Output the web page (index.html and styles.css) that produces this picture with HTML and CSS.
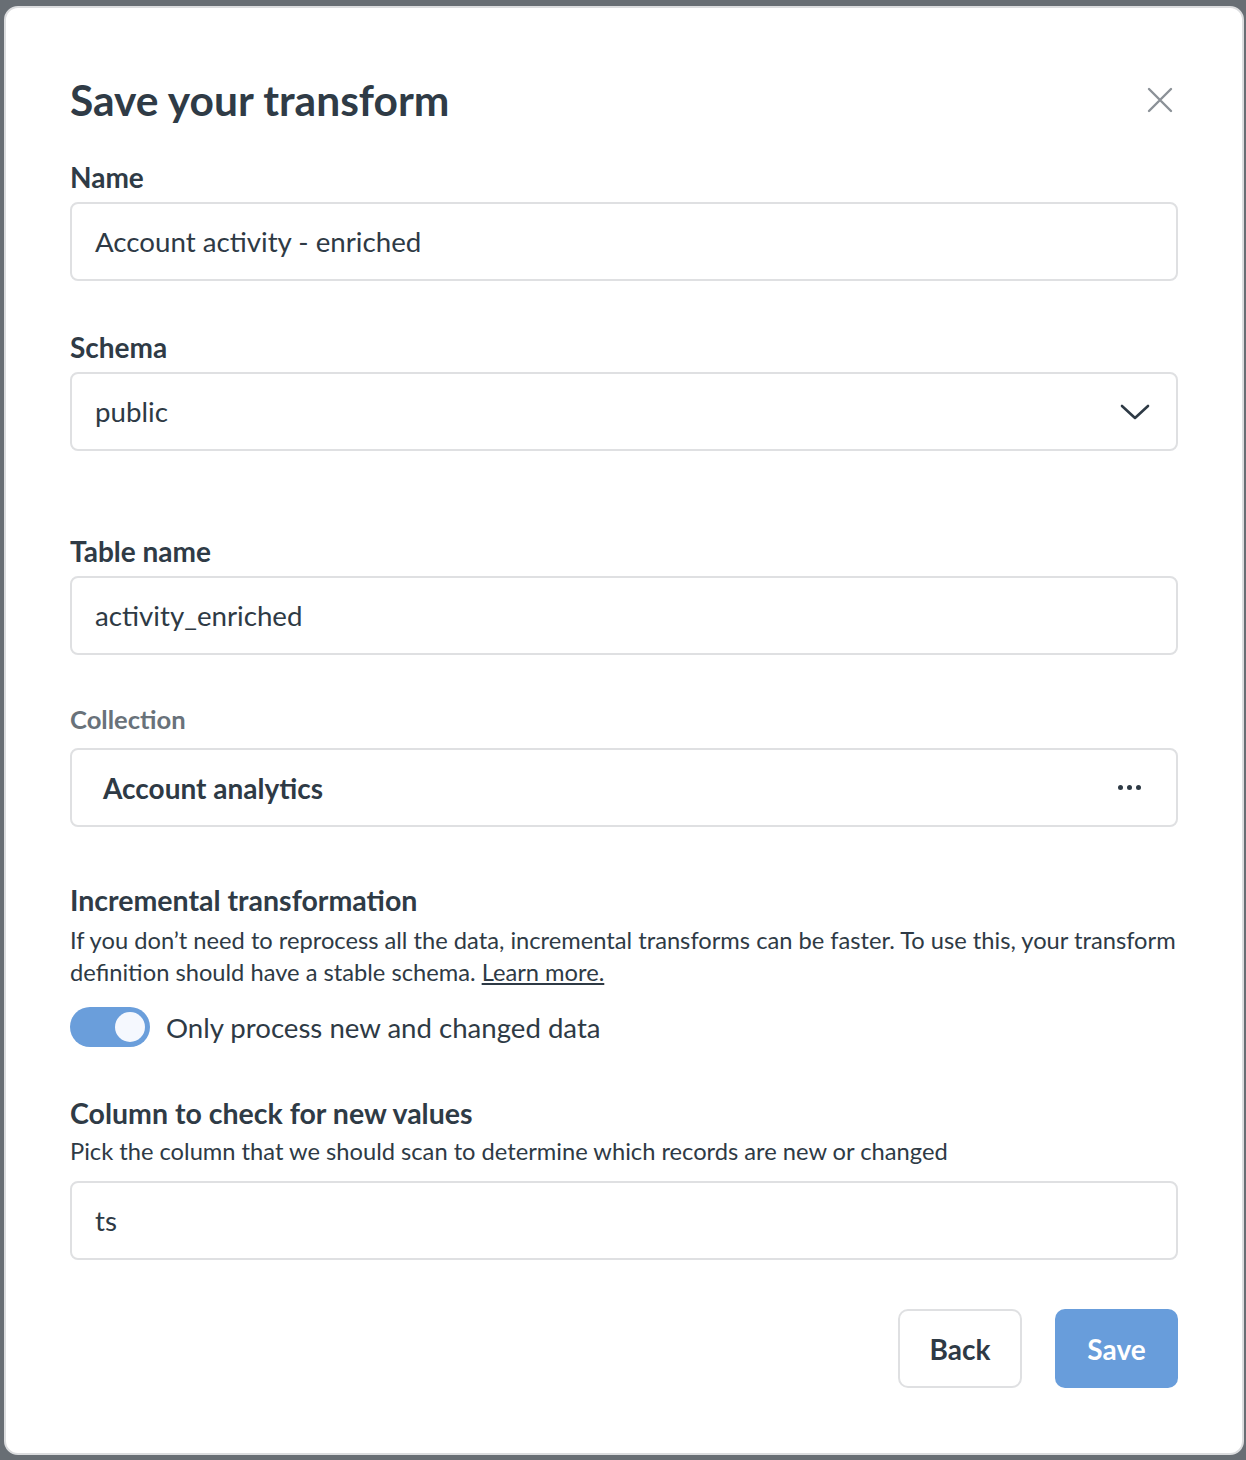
FILE: index.html
```html
<!DOCTYPE html>
<html lang="en">
<head>
<meta charset="utf-8">
<title>Save your transform</title>
<link rel="stylesheet" href="styles.css">
</head>
<body>
<div class="backdrop">
  <div class="modal">
    <div class="modal-header">
      <h1 class="title">Save your transform</h1>
      <button class="close" aria-label="Close">
        <svg width="26" height="26" viewBox="0 0 26 26"><path d="M2 2 L24 24 M24 2 L2 24" stroke="#8b9197" stroke-width="2.4" stroke-linecap="round" fill="none"/></svg>
      </button>
    </div>

    <div class="field">
      <label class="label">Name</label>
      <div class="input">Account activity - enriched</div>
    </div>

    <div class="field">
      <label class="label">Schema</label>
      <div class="input select">
        <span>public</span>
        <svg class="chevron" width="30" height="18" viewBox="0 0 30 18"><path d="M2 3 L15 15 L28 3" stroke="#2e3a45" stroke-width="2.6" stroke-linecap="round" stroke-linejoin="round" fill="none"/></svg>
      </div>
    </div>

    <div class="field table-field">
      <label class="label">Table name</label>
      <div class="input">activity_enriched</div>
    </div>

    <div class="field collection-field">
      <label class="label muted">Collection</label>
      <div class="input collection">
        <span>Account analytics</span>
        <span class="dots"><i></i><i></i><i></i></span>
      </div>
    </div>

    <div class="section">
      <h2 class="heading">Incremental transformation</h2>
      <p class="desc">If you don’t need to reprocess all the data, incremental transforms can be faster. To use this, your transform definition should have a stable schema. <a href="#" class="link">Learn more.</a></p>
      <div class="toggle-row">
        <span class="toggle"><span class="knob"></span></span>
        <span class="toggle-label">Only process new and changed data</span>
      </div>
    </div>

    <div class="section column-section">
      <h2 class="heading">Column to check for new values</h2>
      <p class="desc">Pick the column that we should scan to determine which records are new or changed</p>
      <div class="input">ts</div>
    </div>

    <div class="actions">
      <button class="btn btn-back">Back</button>
      <button class="btn btn-save">Save</button>
    </div>
  </div>
</div>
</body>
</html>
```
FILE: styles.css
```css
* { box-sizing: border-box; }
html, body { margin: 0; padding: 0; }
body {
  background: #686e74;
  font-family: Lato, "Noto Sans", sans-serif;
  color: #2e3a45;
}
.backdrop {
  padding: 6px 2px 5px 4px;
  height: 1460px;
}
.modal {
  background: #fff;
  border: 2px solid #dcdddf;
  border-radius: 14px;
  height: 1449px;
  padding: 0 64px 0 64px;
}
.modal-header {
  display: flex;
  justify-content: space-between;
  align-items: center;
  padding-top: 68px;
}
.title {
  margin: 0;
  font-size: 42.5px;
  font-weight: 700;
  line-height: 48px;
  color: #2f3b46;
}
.close {
  border: 0;
  background: none;
  padding: 0;
  margin-right: 5px;
  display: flex;
  cursor: pointer;
}
.field { margin-top: 37px; }
.field + .field { margin-top: 50px; }
.field.table-field { margin-top: 84px; }
.field.collection-field { margin-top: 48px; }
.label {
  display: block;
  font-size: 28px;
  font-weight: 700;
  line-height: 32px;
  color: #2f3b46;
  margin-bottom: 9px;
}
.label.muted { color: #69727a; font-size: 25.6px; margin-bottom: 13px; }
.input {
  height: 79px;
  border: 2px solid #dfe0e2;
  border-radius: 8px;
  padding: 0 23px;
  display: flex;
  align-items: center;
  font-size: 27.7px;
  color: #2e3a45;
}
.select { justify-content: space-between; padding-right: 26px; }
.collection {
  justify-content: space-between;
  font-size: 28px;
  font-weight: 700;
  padding-left: 31px;
  padding-right: 35px;
}
.dots { display: flex; gap: 4px; }
.dots i {
  width: 5px; height: 5px; border-radius: 50%;
  background: #2e3a45; display: block;
}
.section { margin-top: 57px; }
.heading {
  margin: 0;
  font-size: 28.5px;
  font-weight: 700;
  line-height: 32px;
  color: #2f3b46;
}
.desc {
  margin: 8px 0 0;
  font-size: 23.7px;
  line-height: 32px;
  color: #2e3a45;
}
.link { color: #2e3a45; text-decoration: underline; }
.toggle-row {
  display: flex;
  align-items: center;
  gap: 16px;
  margin-top: 19px;
}
.toggle {
  width: 80px;
  height: 40px;
  border-radius: 20px;
  background: #6a9edb;
  display: flex;
  align-items: center;
  justify-content: flex-end;
  padding-right: 5px;
}
.knob {
  width: 30px; height: 30px; border-radius: 50%;
  background: #f5f8fe;
}
.toggle-label { font-size: 27.6px; color: #2e3a45; }
.column-section { margin-top: 50px; }
.column-section .desc { margin-top: 6px; }
.column-section .input { margin-top: 14px; }
.actions {
  display: flex;
  justify-content: flex-end;
  gap: 33px;
  margin-top: 49px;
}
.btn {
  height: 79px;
  border-radius: 10px;
  font-family: Lato, "Noto Sans", sans-serif;
  font-size: 28px;
  font-weight: 700;
  padding: 0 20px;
  cursor: pointer;
}
.btn-back {
  background: #fff;
  border: 2px solid #dfe0e2;
  color: #2e3a45;
  width: 124px;
}
.btn-save {
  background: #689ddb;
  border: 0;
  color: #fff;
  width: 123px;
}
```
